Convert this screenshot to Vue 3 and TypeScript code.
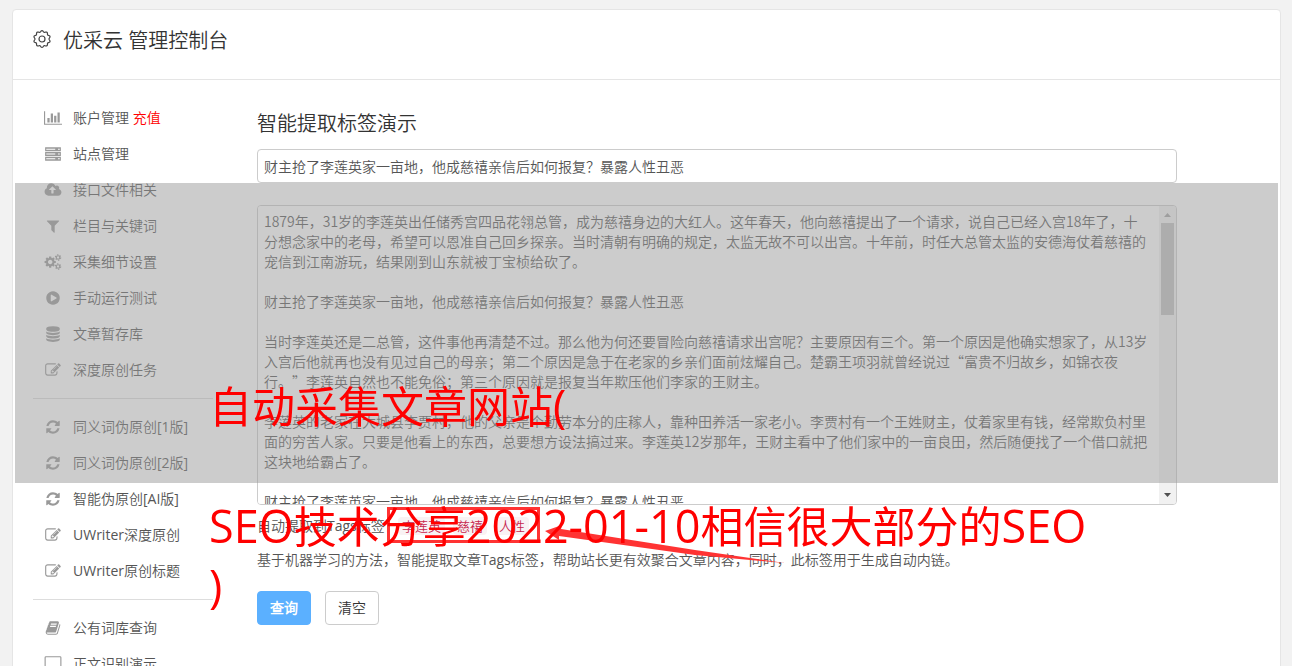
<script setup lang="ts">
import { ref } from 'vue'

interface MenuItem {
  label: string
  icon: string
  extra?: string
}

const paths: Record<string, { box: string; d: string }> = {
  chart: {
    box: '0 0 2048 1792',
    d: 'M640 896v512h-256v-512h256zm384-512v1024h-256v-1024h256zm1024 1152v128h-2048v-1536h128v1408h1920zm-640-896v768h-256v-768h256zm384-384v1152h-256v-1152h256z',
  },
  server: {
    box: '-128 0 2048 1792',
    d: 'M0 128h1792v448H0zM128 288v128h1024V288zM1472 288v128h192V288zM0 672h1792v448H0zM128 832v128h1024V832zM1472 832v128h192V832zM0 1216h1792v448H0zM128 1376v128h1024v-128zM1472 1376v128h192v-128z',
  },
  cloud: {
    box: '-64 0 2048 1792',
    d: 'M1280 864q0-14-9-23l-352-352q-9-9-23-9t-23 9l-351 351q-10 12-10 24 0 14 9 23t23 9h224v352q0 13 9.5 22.5t22.5 9.5h192q13 0 22.5-9.5t9.5-22.5v-352h224q13 0 22.5-9.5t9.5-22.5zm640 288q0 159-112.5 271.5t-271.5 112.5h-1088q-185 0-316.5-131.5t-131.5-316.5q0-130 70-240t188-165q-2-30-2-43 0-212 150-362t362-150q156 0 285.5 87t188.5 231q71-62 166-62 106 0 181 75t75 181q0 76-41 138 130 31 213.5 135.5t83.5 238.5z',
  },
  filter: {
    box: '-128 0 2048 1792',
    d: 'M1595 295q17 41-14 70l-493 493v742q0 42-39 59-13 5-25 5-27 0-45-19l-256-256q-19-19-19-45v-486l-493-493q-31-29-14-70 17-39 59-39h1280q42 0 59 39z',
  },
  cogs: {
    box: '-64 0 2048 1792',
    d: 'M896 896q0-106-75-181t-181-75-181 75-75 181 75 181 181 75 181-75 75-181zm384-91v185q0 10-7 19.5t-16 10.5l-155 24q-11 35-32 76 34 48 90 115 7 10 7 20 0 12-7 19-23 30-82.5 89.5t-78.5 59.5q-11 0-21-7l-115-90q-37 19-77 31-11 108-23 155-7 24-30 24h-186q-11 0-20-7.5t-10-17.5l-23-153q-34-10-75-31l-118 89q-7 7-20 7-11 0-21-8-144-133-144-160 0-9 7-19 10-14 41-53t47-61q-23-44-35-82l-152-24q-10-1-17-9.5t-7-19.5v-185q0-10 7-19.5t16-10.5l155-24q11-35 32-76-34-48-90-115-7-11-7-20 0-12 7-20 22-30 82-89t79-59q11 0 21 7l115 90q34-18 77-32 11-108 23-154 7-24 30-24h186q11 0 20 7.5t10 17.5l23 153q34 10 75 31l118-89q8-7 20-7 11 0 21 8 144 133 144 160 0 9-7 19-12 16-42 54t-45 60q23 48 34 82l152 23q10 2 17 10.5t7 19.5z',
  },
  play: {
    box: '-128 0 2048 1792',
    d: 'M896 128q209 0 385.5 103t279.5 279.5 103 385.5-103 385.5-279.5 279.5-385.5 103-385.5-103-279.5-279.5-103-385.5 103-385.5 279.5-279.5 385.5-103zm384 823q32-18 32-55t-32-55l-544-320q-31-19-64-1-32 19-32 56v640q0 37 32 56 16 8 32 8 17 0 32-9z',
  },
  database: {
    box: '-128 0 2048 1792',
    d: 'M896 768q237 0 443-43t325-127v170q0 69-103 128t-280 93.5-385 34.5-385-34.5-280-93.5-103-128v-170q119 84 325 127t443 43zm0 768q237 0 443-43t325-127v170q0 69-103 128t-280 93.5-385 34.5-385-34.5-280-93.5-103-128v-170q119 84 325 127t443 43zm0-384q237 0 443-43t325-127v170q0 69-103 128t-280 93.5-385 34.5-385-34.5-280-93.5-103-128v-170q119 84 325 127t443 43zm0-1152q208 0 385 34.5t280 93.5 103 128v128q0 69-103 128t-280 93.5-385 34.5-385-34.5-280-93.5-103-128v-128q0-69 103-128t280-93.5 385-34.5z',
  },
  edit: {
    box: '-128 0 2048 1792',
    d: 'M888 1184l116-116-152-152-116 116v56h96v96h56zm440-720q-16-16-33 1l-350 350q-17 17-1 33t33-1l350-350q17-17 1-33zm80 594v190q0 119-84.5 203.5t-203.5 84.5h-832q-119 0-203.5-84.5t-84.5-203.5v-832q0-119 84.5-203.5t203.5-84.5h832q63 0 117 25 15 7 18 23 3 17-9 29l-49 49q-14 14-32 8-23-6-45-6h-832q-66 0-113 47t-47 113v832q0 66 47 113t113 47h832q66 0 113-47t47-113v-126q0-13 9-22l64-64q15-15 35-7t20 29zm-96-738l288 288-672 672h-288v-288zm444 132l-92 92-288-288 92-92q28-28 68-28t68 28l152 152q28 28 28 68t-28 68z',
  },
  refresh: {
    box: '-128 0 2048 1792',
    d: 'M1639 1056q0 5-1 7-64 268-268 434.5t-478 166.5q-146 0-282.5-55t-243.5-157l-129 129q-19 19-45 19t-45-19-19-45v-448q0-26 19-45t45-19h448q26 0 45 19t19 45-19 45l-137 137q71 66 161 102t187 36q134 0 250-65t186-179q11-17 53-117 8-23 30-23h192q13 0 22.5 9.5t9.5 22.5zm25-800v448q0 26-19 45t-45 19h-448q-26 0-45-19t-19-45 19-45l138-138q-148-137-349-137-134 0-250 65t-186 179q-11 17-53 117-8 23-30 23h-199q-13 0-22.5-9.5t-9.5-22.5v-7q65-268 270-434.5t480-166.5q146 0 284 55.5t245 156.5l130-129q19-19 45-19t45 19 19 45z',
  },
  book: {
    box: '-128 0 2048 1792',
    d: 'M1703 478q40 57 18 129l-275 906q-19 64-76.5 107.5t-122.5 43.5h-923q-77 0-148.5-53.5t-99.5-131.5q-24-67-2-127 0-4 3-27t4-37q1-8-3-21.5t-3-19.5q2-11 8-21t16.5-23.5 16.5-23.5q23-38 45-91.5t30-91.5q3-10 .5-30t-.5-28q3-11 17-28t17-23q21-36 42-92t25-90q1-9-2.5-32t.5-28q4-13 22-30.5t22-22.5q19-26 42.5-84.5t27.5-96.5q1-8-3-25.5t-2-26.5q2-8 9-18t18-23 17-21q8-12 16.5-30.5t15-35 16-36 19.5-32 26.5-23.5 36-11.5 47.5 5.5l-1 3q38-9 51-9h761q74 0 114 56t18 130l-274 906q-36 119-71.5 153.5t-128.5 34.5h-869q-27 0-38 15-11 16-1 43 24 70 144 70h923q29 0 56-15.5t35-41.5l300-987q7-22 5-57 38 15 59 43zm-1064 2q-4 13 2 22.5t20 9.5h608q13 0 25.5-9.5t16.5-22.5l21-64q4-13-2-22.5t-20-9.5h-608q-13 0-25.5 9.5t-16.5 22.5zm-83 256q-4 13 2 22.5t20 9.5h608q13 0 25.5-9.5t16.5-22.5l21-64q4-13-2-22.5t-20-9.5h-608q-13 0-25.5 9.5t-16.5 22.5z',
  },
  laptop: {
    box: '0 0 2048 1792',
    d: 'M224 0h1600q160 0 160 160v1040q0 160-160 160H224q-160 0-160-160V160Q64 0 224 0zm0 128q-32 0-32 32v1040q0 32 32 32h1600q32 0 32-32V160q0-32-32-32zM0 1472h2048v128H0z',
  },
}

const gearPath =
  'M' +
  Array.from({ length: 120 }, (_, i) => {
    const angle = (i * Math.PI) / 60
    const radius = 7.7 + 0.7 * Math.cos(10 * angle)
    return `${(9 + radius * Math.sin(angle)).toFixed(2)} ${(9 - radius * Math.cos(angle)).toFixed(2)}`
  }).join('L') +
  'Z'

const groups: MenuItem[][] = [
  [
    { label: '账户管理', icon: 'chart', extra: '充值' },
    { label: '站点管理', icon: 'server' },
    { label: '接口文件相关', icon: 'cloud' },
    { label: '栏目与关键词', icon: 'filter' },
    { label: '采集细节设置', icon: 'cogs' },
    { label: '手动运行测试', icon: 'play' },
    { label: '文章暂存库', icon: 'database' },
    { label: '深度原创任务', icon: 'edit' },
  ],
  [
    { label: '同义词伪原创[1版]', icon: 'refresh' },
    { label: '同义词伪原创[2版]', icon: 'refresh' },
    { label: '智能伪原创[AI版]', icon: 'refresh' },
    { label: 'UWriter深度原创', icon: 'edit' },
    { label: 'UWriter原创标题', icon: 'edit' },
  ],
  [
    { label: '公有词库查询', icon: 'book' },
    { label: '正文识别演示', icon: 'laptop' },
  ],
]

const headline = '财主抢了李莲英家一亩地，他成慈禧亲信后如何报复？暴露人性丑恶'
const title = ref(headline)
const article = ref(
  [
    '1879年，31岁的李莲英出任储秀宫四品花翎总管，成为慈禧身边的大红人。这年春天，他向慈禧提出了一个请求，说自己已经入宫18年了，十分想念家中的老母，希望可以恩准自己回乡探亲。当时清朝有明确的规定，太监无故不可以出宫。十年前，时任大总管太监的安德海仗着慈禧的宠信到江南游玩，结果刚到山东就被丁宝桢给砍了。',
    headline,
    '当时李莲英还是二总管，这件事他再清楚不过。那么他为何还要冒险向慈禧请求出宫呢？主要原因有三个。第一个原因是他确实想家了，从13岁入宫后他就再也没有见过自己的母亲；第二个原因是急于在老家的乡亲们面前炫耀自己。楚霸王项羽就曾经说过“富贵不归故乡，如锦衣夜行。”李莲英自然也不能免俗；第三个原因就是报复当年欺压他们李家的王财主。',
    '李莲英的老家在大城县李贾村，他的父亲是个勤劳本分的庄稼人，靠种田养活一家老小。李贾村有一个王姓财主，仗着家里有钱，经常欺负村里面的穷苦人家。只要是他看上的东西，总要想方设法搞过来。李莲英12岁那年，王财主看中了他们家中的一亩良田，然后随便找了一个借口就把这块地给霸占了。',
    headline,
  ].join('\n\n') + '\n'.repeat(27),
)
const tags = ref(['李莲英', '慈禧', '人性'])

function clearForm() {
  title.value = ''
  article.value = ''
  tags.value = []
}
</script>

<template>
  <div class="page">
    <div class="card">
      <header class="head">
        <svg class="gear" viewBox="0 0 18 18" aria-hidden="true">
          <path :d="gearPath" />
          <circle cx="9" cy="9" r="3" />
        </svg>
        <h1>优采云 管理控制台</h1>
      </header>
      <div class="body">
        <nav class="side">
          <ul v-for="(group, g) in groups" :key="g">
            <li v-for="item in group" :key="item.label">
              <a href="#">
                <svg :viewBox="paths[item.icon].box" aria-hidden="true">
                  <path :d="paths[item.icon].d" fill-rule="evenodd" />
                  <g v-if="item.icon === 'cogs'" fill="none" stroke="#999">
                    <template v-for="cy in [384, 1408]" :key="cy">
                      <circle cx="1536" :cy="cy" r="200" stroke-width="140" />
                      <circle cx="1536" :cy="cy" r="310" stroke-width="120" stroke-dasharray="163 162" />
                    </template>
                  </g>
                </svg>
                <span>{{ item.label }} <em v-if="item.extra">{{ item.extra }}</em></span>
              </a>
            </li>
          </ul>
        </nav>
        <main class="main">
          <h2>智能提取标签演示</h2>
          <input v-model="title" type="text" aria-label="标题" />
          <div class="editor">
            <textarea v-model="article" aria-label="正文" spellcheck="false"></textarea>
            <div class="track" aria-hidden="true">
              <svg viewBox="0 0 17 17"><path d="M5 11L8.500 7L12 11Z" fill="#a3a3a3" /></svg>
              <div class="thumb"></div>
              <svg viewBox="0 0 17 17"><path d="M5 6L8.500 10L12 6Z" fill="#505050" /></svg>
            </div>
          </div>
          <p class="tags">
            <span>自动提取到Tags标签：</span>
            <code v-for="tag in tags" :key="tag">{{ tag }}</code>
          </p>
          <p class="note">基于机器学习的方法，智能提取文章Tags标签，帮助站长更有效聚合文章内容，同时，此标签用于生成自动内链。</p>
          <div class="actions">
            <button type="button" class="primary">查询</button>
            <button type="button" @click="clearForm">清空</button>
          </div>
        </main>
      </div>
    </div>
    <div class="band"></div>
    <svg class="marks" viewBox="0 0 400 60" aria-hidden="true">
      <rect x="3.500" y="4.500" width="150" height="33" fill="none" stroke="#f33" stroke-width="3" />
      <path d="M160 27L177 21L176 25L310 46L400 59L310 51L174 32L174 36Z" fill="#f33" />
    </svg>
    <div class="caption">
      <p>自动采集文章网站<span>(</span></p>
      <p><span>SEO</span>技术分享<span>2022-01-10</span>相信很大部分的<span>SEO</span></p>
      <p><span>)</span></p>
    </div>
  </div>
</template>

<style>
body {
  margin: 0;
  background: #f2f2f2;
}
</style>

<style scoped>
* {
  box-sizing: border-box;
}
.page {
  position: relative;
  height: 100vh;
  overflow: hidden;
  padding: 9px 11px 0 12px;
  background: #f2f2f2;
  color: #555;
  font: 14px/20px "Open Sans", "Noto Sans CJK SC DemiLight", "Noto Sans CJK SC", sans-serif;
}
.card {
  min-height: 100vh;
  background: #fff;
  border: 1px solid #e5e5e5;
  border-radius: 4px;
}
.head {
  display: flex;
  align-items: flex-start;
  gap: 12px;
  height: 70px;
  padding: 16px 20px 0;
  border-bottom: 1px solid #e5e5e5;
}
.gear {
  width: 18px;
  height: 18px;
  margin-top: 4px;
  fill: none;
  stroke: #444;
  stroke-width: 1.2;
}
h1,
h2 {
  margin: 0;
  color: #333;
  font-size: 20px;
  line-height: 30px;
  font-weight: 300;
}
.body {
  display: flex;
  gap: 44px;
  padding: 20px 103px 0 20px;
}
.side {
  flex: 0 0 180px;
}
ul {
  margin: 0;
  padding: 0;
  list-style: none;
}
ul + ul {
  margin-top: 10px;
  padding-top: 10px;
  border-top: 1px solid #ddd;
}
.side a {
  display: flex;
  align-items: center;
  gap: 11px;
  height: 36px;
  padding-left: 11px;
  color: #555;
  text-decoration: none;
  white-space: nowrap;
}
.side svg {
  flex: none;
  width: 18px;
  height: 16px;
  fill: #999;
}
em {
  color: #f00;
  font-style: normal;
}
.main {
  flex: 1;
  min-width: 0;
  padding-top: 9px;
}
input,
textarea {
  display: block;
  margin: 0;
  background: #fff;
  color: #555;
  font: 14px/20px "Noto Sans CJK SC DemiLight", "Noto Sans CJK SC", sans-serif;
  outline: none;
}
input,
.editor {
  width: 100%;
  border: 1px solid #ccc;
  border-radius: 4px;
}
input {
  height: 34px;
  margin-top: 10px;
  padding: 6px;
}
.editor {
  display: flex;
  height: 300px;
  margin-top: 22px;
  overflow: hidden;
}
textarea {
  flex: 1;
  min-width: 0;
  padding: 5px 10px 5px 6px;
  border: 0;
  resize: none;
  scrollbar-width: none;
  text-spacing-trim: space-all;
}
.track {
  display: flex;
  flex: 0 0 17px;
  flex-direction: column;
  background: #f1f1f1;
}
.track svg {
  flex: none;
  width: 17px;
  height: 17px;
}
.thumb {
  height: 92px;
  margin: 0 2px auto;
  background: #c1c1c1;
}
p {
  margin: 0;
}
.tags {
  display: flex;
  align-items: center;
  gap: 8px;
  height: 20px;
  margin-top: 11px;
}
.tags span {
  width: 133px;
  white-space: nowrap;
}
code {
  padding: 0 4px;
  border-radius: 4px;
  background: #f9f2f4;
  color: #c7254e;
  font: 13px/18px "Noto Sans CJK SC DemiLight", "Noto Sans CJK SC", sans-serif;
}
.note {
  margin-top: 14px;
}
.actions {
  display: flex;
  gap: 14px;
  margin-top: 21px;
}
button {
  width: 54px;
  height: 34px;
  padding: 0;
  border: 1px solid #ccc;
  border-radius: 4px;
  background: #fff;
  color: #333;
  font: inherit;
}
.primary {
  border-color: #5bb0ff;
  background: #5bb0ff;
  color: #fff;
  font-weight: 700;
}
.band {
  position: absolute;
  top: 183px;
  right: 14px;
  left: 15px;
  height: 300px;
  background: rgba(153, 153, 153, 0.5);
  pointer-events: none;
}
.marks {
  position: absolute;
  top: 504px;
  left: 385px;
  width: 400px;
  height: 60px;
  pointer-events: none;
}
.caption {
  position: absolute;
  top: 376px;
  left: 209px;
  color: #f00;
  font-family: "Open Sans", "Noto Sans CJK SC", sans-serif;
  font-size: 43px;
  line-height: 60px;
  white-space: nowrap;
  pointer-events: none;
}
.caption span {
  font-size: 45px;
}
.caption p {
  height: 60px;
}
.caption p:first-child {
  margin-bottom: 60px;
}
</style>
